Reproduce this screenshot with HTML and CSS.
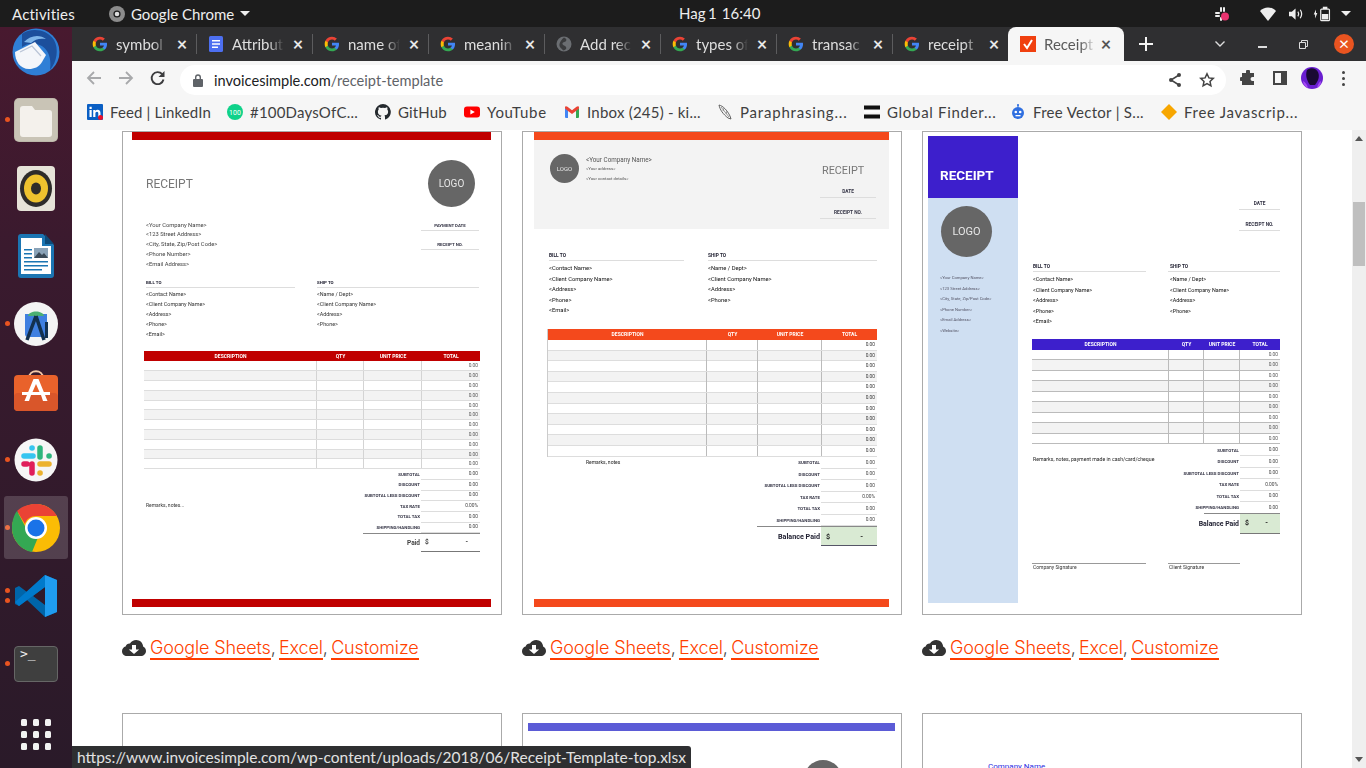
FILE: index.html
```html
<!DOCTYPE html>
<html lang="en">
<head>
<meta charset="utf-8">
<title>Receipt Templates</title>
<link rel="stylesheet" href="styles.css">
</head>
<body>
<svg class="defs" width="0" height="0" aria-hidden="true">
  <defs>
    <symbol id="g" viewBox="0 0 48 48">
      <path fill="#4285f4" d="M45.1 24.5c0-1.600-.1-3.100-.4-4.500H24v8.500h11.800c-.5 2.800-2.100 5.100-4.400 6.700v5.500h7.100c4.200-3.800 6.600-9.500 6.600-16.200z"/>
      <path fill="#34a853" d="M24 46c5.900 0 10.900-2 14.500-5.300l-7.100-5.500c-2 1.300-4.500 2.100-7.400 2.100-5.700 0-10.500-3.800-12.200-9H4.400v5.700C8 41.200 15.400 46 24 46z"/>
      <path fill="#fbbc05" d="M11.800 28.300c-.4-1.300-.7-2.800-.7-4.300s.3-3 .7-4.300V14H4.400C2.900 17 2 20.400 2 24s.9 7 2.400 10l7.400-5.700z"/>
      <path fill="#ea4335" d="M24 10.800c3.200 0 6.100 1.100 8.400 3.300l6.300-6.300C34.900 4.200 29.900 2 24 2 15.400 2 8 6.800 4.400 14l7.400 5.700c1.700-5.200 6.500-8.900 12.200-8.900z"/>
    </symbol>
    <symbol id="cloud" viewBox="0 0 24 16">
      <path fill="#333" d="M5 16C2.200 16 0 13.900 0 11.200c0-2.200 1.500-4.100 3.600-4.600C4.200 4.600 6 3.300 8 3.500 9.300 1.400 11.600 0 14.200 0c3.700 0 6.700 2.800 6.900 6.400 1.700.8 2.900 2.500 2.900 4.500 0 2.800-2.300 5.100-5.200 5.100z"/>
      <path fill="#fff" d="M10 5h4v4.500h3.200L12 14 6.800 9.500H10z"/>
    </symbol>
  </defs>
</svg>

<div class="screen">
  <header class="topbar">
    <span class="activities">Activities</span>
    <span class="appmenu">
      <svg class="chrome-mono" viewBox="0 0 16 16"><circle cx="8" cy="8" r="8" fill="#8c8c8c"/><circle cx="8" cy="8" r="3.600" fill="#1c1c1c"/><circle cx="8" cy="8" r="2.300" fill="#ddd"/></svg>
      <span>Google Chrome</span>
      <i class="tri"></i>
    </span>
    <span class="clock">Hag 1&nbsp;&nbsp;16:40</span>
    <span class="tray">
      <svg class="t-slack" viewBox="0 0 16 16"><g fill="#eee"><rect x="1" y="6" width="5" height="2" rx="1"/><rect x="6" y="1" width="2" height="5" rx="1"/><rect x="9" y="1" width="2" height="5" rx="1"/><rect x="1" y="9" width="5" height="2" rx="1"/><rect x="6" y="11" width="2" height="4" rx="1"/></g><circle cx="11" cy="10.500" r="4" fill="#e8336f"/></svg>
      <svg class="t-wifi" viewBox="0 0 16 14"><path fill="#eee" d="M0 4 C4 -.8 12 -.8 16 4L8 14z"/></svg>
      <svg class="t-vol" viewBox="0 0 16 14"><path fill="#eee" d="M0 4.500h3L7 1v12L3 9.500H0z"/><path fill="none" stroke="#eee" stroke-width="1.300" d="M9.500 4.500c1 1.500 1 3.500 0 5M12 2.500c2 3 2 6 0 9"/></svg>
      <svg class="t-bat" viewBox="0 0 22 16"><path fill="#eee" d="M3 8.500 5.500 3v4H7L4.500 13V8.500z"/><rect x="10.700" y="2.700" width="9.600" height="12.600" rx="1" fill="none" stroke="#eee" stroke-width="1.300"/><rect x="13" y="0" width="5" height="2.500" fill="#eee"/><rect x="12" y="8" width="7" height="6" fill="#eee"/></svg>
      <i class="tri tri-end"></i>
    </span>
  </header>

  <div class="desktop">
    <nav class="dock">
      <div class="dock-item first">
        <svg class="ic-48" viewBox="0 0 48 48"><circle cx="24" cy="24" r="23.500" fill="#2f7fd6"/><path fill="#1c4f9c" d="M10 6c8-6 24-6 32 6 5 9 3 22-4 30 2-12-2-24-14-26-5-1-10 0-14 3z"/><path fill="#7fb6ea" d="M12 14c6-7 16-8 22-3-6-1-11 0-15 4z"/><path fill="#f4f6fa" d="M3 24l20-10 11 13-4 7c-3 5-8 7-13 7-9 0-14-8-14-17z"/><path fill="none" stroke="#b9c4d6" stroke-width="1.200" d="M8 24l12-6 9 10"/></svg>
      </div>
      <div class="dock-item dot">
        <svg class="ic-folder" viewBox="0 0 44 44"><rect width="44" height="44" rx="5" fill="#bdb8aa"/><rect x="1" y="1" width="42" height="42" rx="4" fill="#c9c4b6"/><path fill="#f4f1ec" d="M6 11c0-2 1-3 3-3h9l3 4h14c2 0 3 1 3 3v21c0 2-1 3-3 3H9c-2 0-3-1-3-3z"/></svg>
      </div>
      <div class="dock-item">
        <svg class="ic-rhythm" viewBox="0 0 38 45"><rect width="38" height="45" rx="4" fill="#e6e3d8"/><ellipse cx="19" cy="22.500" rx="16" ry="18.500" fill="#2e2c2a"/><ellipse cx="19" cy="22.500" rx="12" ry="14" fill="#eec22e"/><ellipse cx="19" cy="22.500" rx="5" ry="6" fill="#2e2c2a"/></svg>
      </div>
      <div class="dock-item">
        <svg class="ic-writer" viewBox="0 0 36 44"><path fill="#1b75b2" d="M3 0h22l11 11v30a3 3 0 0 1-3 3H3a3 3 0 0 1-3-3V3a3 3 0 0 1 3-3z"/><path fill="#fff" d="M3 4h21v8h9v28H3z"/><path fill="#0e4a78" d="M27 0l9 10h-9z"/><g fill="#1b75b2"><rect x="6" y="15" width="8" height="1.500"/><rect x="6" y="19" width="8" height="1.500"/><rect x="6" y="23" width="8" height="1.500"/><rect x="6" y="27" width="24" height="1.500"/><rect x="6" y="31" width="24" height="1.500"/><rect x="6" y="35" width="18" height="1.500"/></g><rect x="16" y="14" width="14" height="10" fill="#8aa3b8"/><path fill="#3a4a58" d="M16 24l5-6 3 3 2-2 4 5z"/></svg>
      </div>
      <div class="dock-item dot">
        <svg class="ic-circle" viewBox="0 0 44 44"><ellipse cx="22" cy="22" rx="22" ry="22" fill="#f4f4f4"/><path fill="#3f7fe0" d="M11 12h22v21a2 2 0 0 1-2 2H14a3 3 0 0 1-3-3z"/><path fill="#4caf73" d="M14 14c1-6 15-6 16 0z"/><path fill="none" stroke="#12304f" stroke-width="3.500" d="M22 14L13 38M22 14l8 24"/><rect x="31" y="20" width="3" height="16" fill="#12304f"/></svg>
      </div>
      <div class="dock-item store">
        <svg class="ic-store" viewBox="0 0 44 42"><path fill="none" stroke="#f5c9a8" stroke-width="2" d="M15 9c0-9 14-9 14 0"/><rect y="6" width="44" height="36" rx="4" fill="#e9622b"/><rect y="24" width="44" height="18" rx="4" fill="#d9562a"/><path fill="#fff" d="M19.500 10h5l9 22h-4.500L27 26H17l-2 6h-4.500zM22 15l-3.500 8h7z"/><rect x="8" y="23" width="28" height="3" fill="#fff"/></svg>
      </div>
      <div class="dock-item dot">
        <svg class="ic-circle" viewBox="0 0 44 44"><circle cx="22" cy="22" r="21.500" fill="#f6f6f6"/><g stroke-width="5.500" stroke-linecap="round"><path stroke="#36c5f0" d="M10 18h9"/><path stroke="#2eb67d" d="M26 10v9"/><path stroke="#ecb22e" d="M26 26h9"/><path stroke="#e01e5a" d="M18 26v9M10 26h3"/><path stroke="#36c5f0" d="M18 10h.1"/><path stroke="#2eb67d" d="M35 18h.1"/><path stroke="#ecb22e" d="M26 35h.1"/></g></svg>
      </div>
      <div class="dock-item dot active">
        <svg class="ic-48" viewBox="0 0 48 48"><circle cx="24" cy="24" r="24" fill="#fbbc05"/><path fill="#ea4335" d="M24 0c9 0 17 5 21 12H24c-5 0-10 3-11 8L5 7c4-4 11-7 19-7z"/><path fill="#34a853" d="M5 7l9 17c2 5 6 8 13 7l-7 17C9 46 0 36 0 24 0 17 2 11 5 7z"/><circle cx="24" cy="24" r="11" fill="#fff"/><circle cx="24" cy="24" r="8.500" fill="#1a73e8"/></svg>
      </div>
      <div class="dock-item dot dot2">
        <svg class="ic-code" viewBox="0 0 42 42"><path fill="#0065a9" d="M30 0L12 17 4 11 0 13v16l4 2 8-6 18 17 12-5V5zM30 12v18L18 21z"/><path fill="#1f9cf0" d="M30 0l12 5v32l-12 5z"/><path fill="#007acc" d="M0 27l30-27v12L4 31z"/></svg>
      </div>
      <div class="dock-item dot">
        <div class="term"><span>&gt;_</span></div>
      </div>
      <div class="apps"><i></i><i></i><i></i><i></i><i></i><i></i><i></i><i></i><i></i></div>
    </nav>

    <main class="browser">
      <div class="tabstrip">
        <div class="tab"><svg class="fav"><use href="#g"/></svg><span class="title">symbol</span><span class="x">×</span></div>
        <div class="tab"><svg class="fav" viewBox="0 0 16 16"><rect x="1" width="14" height="16" rx="1.500" fill="#4d6ff0"/><path fill="#fff" d="M4 4h8v1.500H4zM4 7.300h8v1.500H4zM4 10.600h6v1.500H4z"/></svg><span class="title">Attribut</span><span class="x">×</span></div>
        <div class="tab"><svg class="fav"><use href="#g"/></svg><span class="title">name of</span><span class="x">×</span></div>
        <div class="tab"><svg class="fav"><use href="#g"/></svg><span class="title">meanin</span><span class="x">×</span></div>
        <div class="tab"><svg class="fav" viewBox="0 0 16 16"><circle cx="8" cy="8" r="7.500" fill="#6b6e72"/><path fill="#3a3b3d" d="M8 1.500c2 1 3 2 2 3.500S6 6 6.500 8 9 9 10 11s-1 3-2.500 3.500C5 12 3 11 3.500 8 4 6 6 3 8 1.500z"/></svg><span class="title">Add rec</span><span class="x">×</span></div>
        <div class="tab"><svg class="fav"><use href="#g"/></svg><span class="title">types of</span><span class="x">×</span></div>
        <div class="tab"><svg class="fav"><use href="#g"/></svg><span class="title">transac</span><span class="x">×</span></div>
        <div class="tab nosep"><svg class="fav"><use href="#g"/></svg><span class="title">receipt</span><span class="x">×</span></div>
        <div class="tab active"><svg class="fav" viewBox="0 0 16 16"><rect width="16" height="16" fill="#f0400f"/><path fill="none" stroke="#fff" stroke-width="2" d="M4 8l3 4 5-8"/></svg><span class="title">Receipt</span><span class="x">×</span></div>
        <svg class="plus" viewBox="0 0 14 14"><path stroke="#f4f4f4" stroke-width="2" d="M7 0v14M0 7h14"/></svg>
        <div class="winctl">
          <svg class="w-chev" viewBox="0 0 10 6"><path fill="none" stroke="#ddd" stroke-width="1.400" d="M.5.500 5 5 9.500.500"/></svg>
          <i class="w-min"></i>
          <svg class="w-res" viewBox="0 0 9 9"><path fill="none" stroke="#ddd" d="M.5 2.500h6v6h-6zM2.500 2.500v-2h6v6h-2"/></svg>
          <span class="w-close">×</span>
        </div>
      </div>

      <div class="toolbar">
        <svg class="nav back" viewBox="0 0 16 16"><path fill="none" stroke="#a8a9ab" stroke-width="1.800" d="M15 8H2M8 2 2 8l6 6"/></svg>
        <svg class="nav fwd" viewBox="0 0 16 16"><path fill="none" stroke="#a8a9ab" stroke-width="1.800" d="M1 8h13M8 2l6 6-6 6"/></svg>
        <svg class="nav reload" viewBox="0 0 16 16"><path fill="none" stroke="#3c3c3e" stroke-width="1.900" d="M13.500 9.500a6 6 0 1 1-1.300-5.300"/><path fill="#3c3c3e" d="M14.500 1v6h-6z"/></svg>
        <div class="omnibox">
          <svg class="lock" viewBox="0 0 10 13"><path fill="#5f6368" d="M1 5h8a1 1 0 0 1 1 1v6a1 1 0 0 1-1 1H1a1 1 0 0 1-1-1V6a1 1 0 0 1 1-1z"/><path fill="none" stroke="#5f6368" stroke-width="1.400" d="M2.700 5V3.300a2.300 2.300 0 0 1 4.600 0V5"/></svg>
          <span class="url"><b>invoicesimple.com</b>/receipt-template</span>
          <svg class="omni-ic" viewBox="0 0 16 16"><path fill="none" stroke="#444" stroke-width="1.500" d="M12 3 4 8l8 5"/><circle cx="12" cy="3" r="2" fill="#444"/><circle cx="4" cy="8" r="2" fill="#444"/><circle cx="12" cy="13" r="2" fill="#444"/></svg>
          <svg class="omni-ic star" viewBox="0 0 16 16"><path fill="none" stroke="#444" stroke-width="1.500" d="M8 1.800l1.900 4.100 4.400.5-3.300 3 .9 4.400L8 11.600l-3.900 2.200.9-4.400-3.300-3 4.400-.5z"/></svg>
        </div>
        <svg class="tool puzzle" viewBox="0 0 16 16"><path fill="#444" d="M6 1.500a2 2 0 0 1 4 0V3h4v4h-1.500a2 2 0 0 0 0 4H14v4H2v-4h-.5a2 2 0 0 1 0-4H2V3h4z"/></svg>
        <svg class="tool panel" viewBox="0 0 16 16"><path fill="#444" d="M1 1h14v14H1zM3 3v10h6V3z"/></svg>
        <svg class="avatar" viewBox="0 0 22 22"><circle cx="11" cy="11" r="11" fill="#6a1fd0"/><path fill="#1a0a33" d="M6 3c4-3 9-2 11 2 2 5 0 9-3 13H9C6 14 4 8 6 3z"/><path fill="#a64bf5" d="M2 14c2 1 4 3 5 7-3-1-5-4-5-7zM20 14c-2 1-3 3-4 7 3-1 4-4 4-7z"/></svg>
        <span class="kebab"><i></i><i></i><i></i></span>
      </div>

      <div class="bookmarks">
        <a class="bm bm-1"><svg viewBox="0 0 16 16"><rect width="16" height="16" rx="1" fill="#0a5fc4"/><path fill="#fff" d="M2.500 6h2.200v7H2.500zM2.500 2.800h2.200V5H2.500zM6.200 6h2.100v1c.5-.8 1.300-1.200 2.300-1.200 2 0 2.900 1.300 2.900 3.300V13h-2.200V9.500c0-1-.4-1.700-1.300-1.700S8.400 8.500 8.400 9.500V13H6.200z"/><circle cx="13.500" cy="13.500" r="2.500" fill="#e8112d"/></svg><span>Feed | LinkedIn</span></a>
        <a class="bm bm-2"><svg viewBox="0 0 16 16"><circle cx="8" cy="8" r="8" fill="#0fd28a"/><text x="8" y="10.500" text-anchor="middle" font-size="7" fill="#fff">100</text></svg><span>#100DaysOfC...</span></a>
        <a class="bm bm-3"><svg viewBox="0 0 16 16"><path fill="#24292e" d="M8 0a8 8 0 0 0-2.500 15.600c.4.100.5-.2.500-.4v-1.400c-2.200.5-2.700-1-2.700-1-.4-.9-.9-1.200-.9-1.200-.7-.5.100-.5.100-.5.800.1 1.200.8 1.200.8.700 1.200 1.900.9 2.300.7.100-.5.300-.9.500-1.100-1.800-.2-3.600-.9-3.600-4 0-.9.300-1.600.8-2.100-.1-.2-.4-1 .1-2.100 0 0 .7-.2 2.200.8a7.600 7.600 0 0 1 4 0c1.500-1 2.200-.8 2.200-.8.400 1.100.2 1.900.1 2.100.5.600.8 1.300.8 2.100 0 3.100-1.900 3.700-3.700 3.900.3.300.6.800.6 1.500v2.200c0 .2.100.5.600.4A8 8 0 0 0 8 0z"/></svg><span>GitHub</span></a>
        <a class="bm bm-4"><svg viewBox="0 0 16 16"><rect y="2.500" width="16" height="11" rx="3" fill="#f00"/><path fill="#fff" d="M6.400 5.500v5L10.800 8z"/></svg><span>YouTube</span></a>
        <a class="bm bm-5"><svg viewBox="0 0 16 16"><path fill="#4285f4" d="M1 14V4l3 2v8H2a1 1 0 0 1-1-1z"/><path fill="#34a853" d="M15 14V4l-3 2v8h2a1 1 0 0 0 1-1z"/><path fill="#ea4335" d="M1 3.500C1 2 2.500 2 3.500 2.800L8 6.300l4.500-3.500C13.500 2 15 2 15 3.500v1L12 7 8 10 4 7 1 4.500z"/></svg><span>Inbox (245) - ki...</span></a>
        <a class="bm bm-6"><svg viewBox="0 0 16 16"><path fill="#f4f4f4" stroke="#555" stroke-width=".9" d="M2 1c4 1 8 5 11 11l1 3-3-1C6 10 3 6 2 1z"/><path fill="none" stroke="#777" stroke-width=".7" d="M4 3l8 10M7 4 6 7m4 0-1 3"/></svg><span>Paraphrasing...</span></a>
        <a class="bm bm-7"><svg viewBox="0 0 16 16"><rect y="1.500" width="16" height="4" fill="#111"/><rect y="6.500" width="16" height="2" fill="#fff"/><rect y="10.500" width="16" height="4" fill="#111"/></svg><span>Global Finder...</span></a>
        <a class="bm bm-8"><svg viewBox="0 0 16 16"><circle cx="8" cy="9" r="6" fill="#2f6fe0"/><path stroke="#2f6fe0" stroke-width="1.200" d="M8 3V.8"/><circle cx="8" cy="1" r="1" fill="#2f6fe0"/><circle cx="5.800" cy="8" r="1.300" fill="#fff"/><circle cx="10.200" cy="8" r="1.300" fill="#fff"/><rect x="5.500" y="11" width="5" height="1.300" fill="#fff"/></svg><span>Free Vector | S...</span></a>
        <a class="bm bm-9"><svg viewBox="0 0 16 16"><path fill="#f7a600" d="M8 0l8 8-8 8-8-8z"/></svg><span>Free Javascrip...</span></a>
      </div>

      <div class="viewport">
        <div class="page">
          <div class="templates">

            <section class="template">
              <div class="card doc doc-a">
                <div class="bar"></div>
                <div class="a-head"><h2 class="rc">RECEIPT</h2><div class="logo">LOGO</div></div>
                <div class="a-info">
                  <div class="lines"><p>&lt;Your Company Name&gt;</p><p>&lt;123 Street Address&gt;</p><p>&lt;City, State, Zip/Post Code&gt;</p><p>&lt;Phone Number&gt;</p><p>&lt;Email Address&gt;</p></div>
                  <div class="meta"><p>PAYMENT DATE</p><p>RECEIPT NO.</p></div>
                </div>
                <div class="parties">
                  <div class="party p-l"><h3>BILL TO</h3><p>&lt;Contact Name&gt;</p><p>&lt;Client Company Name&gt;</p><p>&lt;Address&gt;</p><p>&lt;Phone&gt;</p><p>&lt;Email&gt;</p></div>
                  <div class="party p-r"><h3>SHIP TO</h3><p>&lt;Name / Dept&gt;</p><p>&lt;Client Company Name&gt;</p><p>&lt;Address&gt;</p><p>&lt;Phone&gt;</p></div>
                </div>
                <div class="table">
                  <div class="thead"><span>DESCRIPTION</span><span>QTY</span><span>UNIT PRICE</span><span>TOTAL</span></div>
                  <div class="row"><i></i><i></i><i></i><span>0.00</span></div>
                  <div class="row"><i></i><i></i><i></i><span>0.00</span></div>
                  <div class="row"><i></i><i></i><i></i><span>0.00</span></div>
                  <div class="row"><i></i><i></i><i></i><span>0.00</span></div>
                  <div class="row"><i></i><i></i><i></i><span>0.00</span></div>
                  <div class="row"><i></i><i></i><i></i><span>0.00</span></div>
                  <div class="row"><i></i><i></i><i></i><span>0.00</span></div>
                  <div class="row"><i></i><i></i><i></i><span>0.00</span></div>
                  <div class="row"><i></i><i></i><i></i><span>0.00</span></div>
                  <div class="row"><i></i><i></i><i></i><span>0.00</span></div>
                  <div class="row"><i></i><i></i><i></i><span>0.00</span></div>
                </div>
                <div class="summary">
                  <p class="remarks">Remarks, notes...</p>
                  <div class="totals">
                    <div class="tr"><span>SUBTOTAL</span><span>0.00</span></div>
                    <div class="tr"><span>DISCOUNT</span><span>0.00</span></div>
                    <div class="tr"><span>SUBTOTAL LESS DISCOUNT</span><span>0.00</span></div>
                    <div class="tr"><span>TAX RATE</span><span>0.00%</span></div>
                    <div class="tr"><span>TOTAL TAX</span><span>0.00</span></div>
                    <div class="tr"><span>SHIPPING/HANDLING</span><span>0.00</span></div>
                    <div class="paid"><span>Paid</span><span><b>$</b><b>-</b></span></div>
                  </div>
                </div>
                <div class="bar bar-end"></div>
              </div>
              <div class="links"><svg class="cloud"><use href="#cloud"/></svg><span class="ll"><a>Google Sheets</a>, <a>Excel</a>, <a>Customize</a></span></div>
            </section>

            <section class="template">
              <div class="card doc doc-b">
                <div class="bar"></div>
                <div class="b-head">
                  <div class="logo">LOGO</div>
                  <div class="b-co"><p class="co-name">&lt;Your Company Name&gt;</p><p class="co-sm">&lt;Your address&gt;</p><p class="co-sm co-gap">&lt;Your contact details&gt;</p></div>
                  <div class="b-right"><h2 class="rc">RECEIPT</h2><div class="meta"><p>DATE</p><p>RECEIPT NO.</p></div></div>
                </div>
                <div class="parties">
                  <div class="party p-l"><h3>BILL TO</h3><p>&lt;Contact Name&gt;</p><p>&lt;Client Company Name&gt;</p><p>&lt;Address&gt;</p><p>&lt;Phone&gt;</p><p>&lt;Email&gt;</p></div>
                  <div class="party p-r"><h3>SHIP TO</h3><p>&lt;Name / Dept&gt;</p><p>&lt;Client Company Name&gt;</p><p>&lt;Address&gt;</p><p>&lt;Phone&gt;</p></div>
                </div>
                <div class="table">
                  <div class="thead"><span>DESCRIPTION</span><span>QTY</span><span>UNIT PRICE</span><span>TOTAL</span></div>
                  <div class="row"><i></i><i></i><i></i><span>0.00</span></div>
                  <div class="row"><i></i><i></i><i></i><span>0.00</span></div>
                  <div class="row"><i></i><i></i><i></i><span>0.00</span></div>
                  <div class="row"><i></i><i></i><i></i><span>0.00</span></div>
                  <div class="row"><i></i><i></i><i></i><span>0.00</span></div>
                  <div class="row"><i></i><i></i><i></i><span>0.00</span></div>
                  <div class="row"><i></i><i></i><i></i><span>0.00</span></div>
                  <div class="row"><i></i><i></i><i></i><span>0.00</span></div>
                  <div class="row"><i></i><i></i><i></i><span>0.00</span></div>
                  <div class="row"><i></i><i></i><i></i><span>0.00</span></div>
                  <div class="row"><i></i><i></i><i></i><span>0.00</span></div>
                </div>
                <div class="summary">
                  <p class="remarks">Remarks, notes</p>
                  <div class="totals">
                    <div class="tr"><span>SUBTOTAL</span><span>0.00</span></div>
                    <div class="tr"><span>DISCOUNT</span><span>0.00</span></div>
                    <div class="tr"><span>SUBTOTAL LESS DISCOUNT</span><span>0.00</span></div>
                    <div class="tr"><span>TAX RATE</span><span>0.00%</span></div>
                    <div class="tr"><span>TOTAL TAX</span><span>0.00</span></div>
                    <div class="tr"><span>SHIPPING/HANDLING</span><span>0.00</span></div>
                    <div class="paid"><span>Balance Paid</span><span><b>$</b><b>-</b></span></div>
                  </div>
                </div>
                <div class="bar bar-end"></div>
              </div>
              <div class="links"><svg class="cloud"><use href="#cloud"/></svg><span class="ll"><a>Google Sheets</a>, <a>Excel</a>, <a>Customize</a></span></div>
            </section>

            <section class="template">
              <div class="card doc doc-c">
                <aside class="side">
                  <div class="side-head"><h2>RECEIPT</h2></div>
                  <div class="logo">LOGO</div>
                  <div class="side-lines"><p>&lt;Your Company Name&gt;</p><p>&lt;123 Street Address&gt;</p><p>&lt;City, State, Zip/Post Code&gt;</p><p>&lt;Phone Number&gt;</p><p>&lt;Email Address&gt;</p><p>&lt;Website&gt;</p></div>
                </aside>
                <div class="c-main">
                  <div class="meta"><p>DATE</p><p>RECEIPT NO.</p></div>
                  <div class="parties">
                    <div class="party p-l"><h3>BILL TO</h3><p>&lt;Contact Name&gt;</p><p>&lt;Client Company Name&gt;</p><p>&lt;Address&gt;</p><p>&lt;Phone&gt;</p><p>&lt;Email&gt;</p></div>
                    <div class="party p-r"><h3>SHIP TO</h3><p>&lt;Name / Dept&gt;</p><p>&lt;Client Company Name&gt;</p><p>&lt;Address&gt;</p><p>&lt;Phone&gt;</p></div>
                  </div>
                  <div class="table">
                    <div class="thead"><span>DESCRIPTION</span><span>QTY</span><span>UNIT PRICE</span><span>TOTAL</span></div>
                    <div class="row"><i></i><i></i><i></i><span>0.00</span></div>
                    <div class="row"><i></i><i></i><i></i><span>0.00</span></div>
                    <div class="row"><i></i><i></i><i></i><span>0.00</span></div>
                    <div class="row"><i></i><i></i><i></i><span>0.00</span></div>
                    <div class="row"><i></i><i></i><i></i><span>0.00</span></div>
                    <div class="row"><i></i><i></i><i></i><span>0.00</span></div>
                    <div class="row"><i></i><i></i><i></i><span>0.00</span></div>
                    <div class="row"><i></i><i></i><i></i><span>0.00</span></div>
                    <div class="row"><i></i><i></i><i></i><span>0.00</span></div>
                  </div>
                  <div class="summary">
                    <p class="remarks">Remarks, notes, payment made in cash/card/cheque</p>
                    <div class="totals">
                      <div class="tr"><span>SUBTOTAL</span><span>0.00</span></div>
                      <div class="tr"><span>DISCOUNT</span><span>0.00</span></div>
                      <div class="tr"><span>SUBTOTAL LESS DISCOUNT</span><span>0.00</span></div>
                      <div class="tr"><span>TAX RATE</span><span>0.00%</span></div>
                      <div class="tr"><span>TOTAL TAX</span><span>0.00</span></div>
                      <div class="tr"><span>SHIPPING/HANDLING</span><span>0.00</span></div>
                      <div class="paid"><span>Balance Paid</span><span><b>$</b><b>-</b></span></div>
                    </div>
                  </div>
                  <div class="signs"><p class="s-l">Company Signature</p><p class="s-r">Client Signature</p></div>
                </div>
              </div>
              <div class="links"><svg class="cloud"><use href="#cloud"/></svg><span class="ll"><a>Google Sheets</a>, <a>Excel</a>, <a>Customize</a></span></div>
            </section>

            <section class="template"><div class="card"></div></section>
            <section class="template"><div class="card peek-b"><div class="peek-bar"></div><div class="peek-logo"></div></div></section>
            <section class="template"><div class="card peek-c"><p>Company Name</p></div></section>
          </div>
        </div>
        <div class="scrollbar">
          <i class="arr up"></i>
          <div class="track"><div class="thumb"></div></div>
          <i class="arr down"></i>
        </div>
        <div class="status">https://www.invoicesimple.com/wp-content/uploads/2018/06/Receipt-Template-top.xlsx</div>
      </div>
    </main>
  </div>
</div>
</body>
</html>
```
FILE: styles.css
```css
* { box-sizing: border-box; }
html, body { margin: 0; padding: 0; height: 100%; overflow: hidden; }
body { font-family: "Lato", "Noto Sans", sans-serif; background: #fff; color: #222; }
p, h2, h3 { margin: 0; font-weight: inherit; font-size: inherit; }
.defs { position: absolute; }
.screen { width: 1366px; height: 768px; display: flex; flex-direction: column; overflow: hidden; }

/* top bar */
.topbar { height: 27px; background: #1c1c1c; color: #eee; display: flex; align-items: center; font-size: 15px; position: relative; flex: none; }
.activities { margin-left: 12px; width: 97px; letter-spacing: .2px; }
.appmenu { display: flex; align-items: center; gap: 6px; }
.chrome-mono { width: 16px; height: 16px; }
.tri { width: 0; height: 0; border: 5px solid transparent; border-top: 5px solid #eee; border-bottom: 0; margin-left: 0; }
.clock { position: absolute; left: 679px; top: 5px; line-height: 17px; word-spacing: -1.300px; }
.tray { margin-left: auto; display: flex; align-items: center; }
.t-slack { width: 16px; height: 16px; margin-right: 30px; }
.t-wifi { width: 16px; height: 14px; margin-right: 13px; }
.t-vol { width: 15px; height: 14px; margin-right: 7px; }
.t-bat { width: 20px; height: 16px; margin-right: 10px; }
.tri-end { margin-right: 15px; }

.desktop { flex: 1; display: flex; min-height: 0; }

/* dock */
.dock { width: 72px; flex: none; background: linear-gradient(180deg, #48192f 0%, #3a1a2e 30%, #2a1a29 100%); display: flex; flex-direction: column; }
.dock-item { height: 68px; display: flex; align-items: center; justify-content: center; position: relative; flex: none; }
.dock-item.first { height: 59px; align-items: flex-start; padding-top: 1px; }
.dock-item.dot::before { content: ""; position: absolute; left: 5px; top: 31px; width: 5px; height: 5px; border-radius: 50%; background: #e95420; }
.dock-item.dot2::before { top: 26px; box-shadow: 0 10px 0 #e95420; }
.dock-item.active::after { content: ""; position: absolute; left: 4px; top: 2px; width: 64px; height: 63px; border-radius: 3px; background: rgba(255,255,255,.17); }
.dock-item.store { padding-bottom: 4px; }
.dock-item svg { position: relative; z-index: 1; flex: none; }
.ic-48 { width: 48px; height: 48px; }
.ic-folder { width: 44px; height: 44px; }
.ic-rhythm { width: 38px; height: 45px; }
.ic-writer { width: 36px; height: 44px; }
.ic-circle { width: 44px; height: 44px; }
.ic-store { width: 44px; height: 42px; }
.ic-code { width: 42px; height: 42px; }
.term { width: 44px; height: 36px; background: #3f3f3f; border: 1px solid #666; border-radius: 4px; color: #eee; font: 13px/14px "DejaVu Sans Mono", monospace; padding: 0 5px; }
.apps { display: grid; grid-template-columns: repeat(3, 6px); grid-auto-rows: 6.500px; gap: 5.500px 6px; margin: 21px 0 0 21px; }
.apps i { background: #f2f2f2; border-radius: 1.500px; }

/* browser */
.browser { flex: 1; min-width: 0; display: flex; flex-direction: column; }
.tabstrip { height: 34px; flex: none; background: #2f2f31; display: flex; padding-left: 12px; color: #dedede; font-size: 15px; align-items: stretch; }
.tab { width: 116px; flex: none; display: flex; align-items: center; padding: 0 11px 0 8px; position: relative; }
.tab::after { content: ""; position: absolute; right: 3px; top: 7px; height: 20px; width: 1px; background: #5c5c5e; }
.tab.nosep::after, .tab.active::after { display: none; }
.fav { width: 16px; height: 16px; flex: none; }
.title { margin-left: 8px; width: 52px; overflow: hidden; white-space: nowrap; flex: none; -webkit-mask-image: linear-gradient(90deg, #000 70%, transparent); mask-image: linear-gradient(90deg, #000 70%, transparent); }
.x { margin-left: auto; font-size: 18px; font-weight: 700; line-height: 18px; width: 14px; text-align: center; color: #e8e8e8; }
.tab.active { background: #f6f6f6; color: #5a5a5a; margin-left: -4px; padding-left: 12px; border-radius: 8px 8px 0 0; }
.tab.active .x { color: #555; }
.plus { width: 14px; height: 14px; margin: 10px 0 0 15px; flex: none; }
.winctl { margin-left: auto; display: flex; align-items: center; padding-right: 12px; }
.w-chev { width: 10px; height: 6px; }
.w-min { width: 9px; height: 1.500px; background: #ddd; margin: 6px 0 0 33px; }
.w-res { width: 9px; height: 9px; margin-left: 32px; }
.w-close { width: 20px; height: 20px; border-radius: 50%; background: #e95420; color: #fff; margin-left: 26px; text-align: center; font-size: 18px; line-height: 19px; }

.toolbar { height: 34px; flex: none; background: #f6f6f6; display: flex; align-items: center; position: relative; }
.nav { width: 16px; height: 16px; flex: none; }
.back { margin-left: 14px; }
.fwd { margin-left: 16px; }
.reload { margin-left: 16px; }
.omnibox { width: 1046px; height: 30px; margin: 4px 0 0 14px; background: #fff; border-radius: 15px; display: flex; align-items: center; flex: none; padding-right: 11px; }
.lock { width: 10px; height: 13px; margin-left: 13px; flex: none; }
.url { margin-left: 11px; font-size: 14.600px; color: #5f6368; }
.url b { font-weight: 400; color: #202124; }
.omni-ic { width: 16px; height: 16px; margin-left: auto; }
.star { margin-left: 16px; }
.tool { width: 16px; height: 16px; flex: none; }
.puzzle { margin-left: 14px; }
.panel { margin-left: 16px; }
.avatar { width: 22px; height: 22px; margin-left: 13px; flex: none; }
.kebab { display: flex; flex-direction: column; gap: 3px; margin-left: 19px; }
.kebab i { width: 3px; height: 3px; border-radius: 50%; background: #444; }

.bookmarks { height: 35px; flex: none; background: #f6f6f6; display: flex; align-items: center; padding: 0 0 1px 15px; font-size: 15px; color: #3f3f41; }
.bm { display: flex; align-items: center; gap: 7px; white-space: nowrap; margin-right: 16px; flex: none; }
.bm svg { width: 16px; height: 16px; flex: none; font-family: "Roboto", sans-serif; }
.bm span { display: block; }
.bm-1 span { width: 101px; letter-spacing: .13px; }
.bm-2 span { width: 109px; letter-spacing: .2px; }
.bm-3 span { width: 50px; letter-spacing: .15px; }
.bm-4 span { width: 61px; letter-spacing: .7px; }
.bm-5 span { width: 114px; letter-spacing: .22px; }
.bm-6 span { width: 108px; letter-spacing: .8px; }
.bm-7 span { width: 107px; letter-spacing: .7px; }
.bm-8 span { width: 112px; letter-spacing: .3px; }
.bm-9 span { width: 113px; letter-spacing: .7px; }

/* page */
.viewport { flex: 1; min-height: 0; display: flex; position: relative; overflow: hidden; background: #fff; }
.page { flex: 1; min-width: 0; padding: 1px 0 0 50px; overflow: hidden; }
.templates { display: grid; grid-template-columns: repeat(3, 380px); column-gap: 20px; }
.template { display: flex; flex-direction: column; }
.card { width: 380px; height: 484px; border: 1px solid #aaa; background: #fff; flex: none; }
.links { height: 98px; flex: none; display: flex; align-items: flex-start; padding-top: 25px; font-family: "Inter", sans-serif; font-weight: 300; font-size: 18px; letter-spacing: -.15px; word-spacing: -1.500px; line-height: 24px; color: #444; }
.cloud { width: 24px; height: 16px; margin-right: 4px; flex: none; }
.ll { margin-top: -4px; white-space: nowrap; }
.ll a { color: #ff4100; border-bottom: 2px solid #ff3d00; word-spacing: 0; }

.scrollbar { width: 14px; flex: none; background: #efefef; display: flex; flex-direction: column; align-items: center; }
.arr { width: 0; height: 0; border: 4px solid transparent; flex: none; }
.arr.up { border-bottom: 5px solid #555; border-top: 0; margin-top: 6px; }
.arr.down { border-top: 5px solid #555; border-bottom: 0; margin-bottom: 6px; }
.track { flex: 1; width: 100%; padding: 61px 1px 0; }
.thumb { height: 64px; background: #bfbfbf; }
.status { position: absolute; left: 0; bottom: 0; width: 619px; height: 22px; background: #2e2f31; color: #e2e2e2; border-top-right-radius: 3px; font-size: 15.500px; line-height: 22px; padding-left: 5px; white-space: nowrap; }

/* mini documents */
.doc { font-family: "Roboto", "Liberation Sans", sans-serif; font-size: 6px; color: #444; display: flex; flex-direction: column; filter: blur(.25px); }
.bar { height: 8px; flex: none; }
.bar-end { margin-top: auto; height: 8px; }
.logo { border-radius: 50%; background: #666; color: #e6e6e6; display: flex; align-items: center; justify-content: center; flex: none; }
.rc { color: #777; font-weight: 400; }
.meta { flex: none; text-align: center; font-weight: 700; font-size: 4.800px; color: #334; }
.meta p { height: 11px; line-height: 10px; border-bottom: 1px solid #ddd; }
.party h3 { font-weight: 700; font-size: 4.800px; color: #223; line-height: 9px; height: 10px; border-bottom: 1px solid #ddd; }
.parties { display: flex; flex: none; }
.table { flex: none; }
.thead { display: grid; color: #fff; font-weight: 700; font-size: 5px; text-align: center; }
.row { display: grid; font-size: 4.800px; color: #555; text-align: right; border-bottom: 1px solid #ddd; }
.row i { border-right: 1px solid #d4d4d4; }
.row span { padding-right: 2px; }
.row:nth-child(odd) { background: #f3f3f3; }
.summary { display: flex; justify-content: space-between; flex: none; }
.totals { flex: none; display: flex; flex-direction: column; }
.tr, .paid { display: grid; }
.tr span:first-child, .paid span:first-child { display: flex; justify-content: flex-end; white-space: nowrap; padding-right: 1px; align-items: center; }
.tr span:first-child { font-weight: 700; font-size: 4.400px; color: #334; }
.tr span:last-child { text-align: right; padding-right: 2px; font-size: 4.800px; border-bottom: 1px solid #ddd; color: #444; }
.paid { border-top: 1px solid #888; }
.paid span:first-child { font-weight: 700; color: #444; }
.paid span:last-child { display: flex; justify-content: space-between; align-items: center; border-bottom: 1px solid #777; }
.paid b { font-weight: 700; }

/* doc a */
.doc-a { padding: 0 10px 7px 9px; }
.doc-a .bar { background: #c00000; }
.a-head { display: flex; justify-content: space-between; align-items: center; margin-top: 20px; padding: 0 16px 0 14px; flex: none; }
.doc-a .rc { font-size: 12px; }
.doc-a .logo { width: 47px; height: 47px; font-size: 10px; }
.a-info { display: flex; justify-content: space-between; margin-top: 13.500px; padding: 0 12px 0 14px; flex: none; }
.a-info .lines p { height: 9.800px; line-height: 9.800px; font-size: 5.800px; }
.a-info .meta { width: 58px; font-size: 4.400px; }
.a-info .meta p { height: 10px; line-height: 9px; margin-bottom: 9px; }
.doc-a .parties { margin-top: 8.500px; padding: 0 12px 0 14px; gap: 22px; color: #333; }
.doc-a .p-l { width: 149px; } .doc-a .p-r { width: 162px; }
.doc-a .party p { height: 9.800px; line-height: 9.800px; font-size: 5.400px; }
.doc-a .party h3 { margin-bottom: 2.500px; font-size: 4.400px; }
.doc-a .table { margin: 11.500px 11px 0 12px; }
.doc-a .thead, .doc-a .row { grid-template-columns: 173px 47px 58px 58px; }
.doc-a .thead { background: #c00000; height: 10.500px; line-height: 10.500px; }
.doc-a .row { height: 9.800px; line-height: 9px; }
.doc-a .summary { margin: 0 11px 0 12px; }
.doc-a .remarks { font-size: 5px; margin: 32.500px 0 0 2px; color: #333; }
.doc-a .tr, .doc-a .paid { grid-template-columns: 58px 59px; }
.doc-a .tr { height: 10.600px; line-height: 10px; }
.doc-a .paid { height: 19px; font-size: 6.500px; }
.doc-a .paid span:last-child { padding: 0 12px 0 4px; }

/* doc b */
.doc-b { padding: 0 12px 7px 11px; }
.doc-b .bar { background: #f4491c; }
.b-head { background: #f3f3f3; height: 89px; flex: none; display: flex; padding: 14px 13px 0 16px; }
.doc-b .logo { width: 29px; height: 29px; font-size: 6px; }
.b-co { margin-left: 7px; padding-top: 2px; color: #555; }
.co-name { font-size: 6.300px; line-height: 9px; }
.co-sm { font-size: 4.300px; line-height: 8px; }
.co-gap { margin-top: 2px; }
.b-right { margin-left: auto; width: 56px; padding-top: 10px; }
.doc-b .rc { font-size: 10.800px; line-height: 13px; padding-left: 2px; }
.doc-b .meta { margin-top: 10px; }
.doc-b .meta p + p { margin-top: 10px; }
.doc-b .parties { margin-top: 22px; padding: 0 12px 0 15px; gap: 24px; color: #111; }
.doc-b .p-l { width: 135px; } .doc-b .p-r { width: 169px; }
.doc-b .party p { height: 10.600px; line-height: 10.600px; font-size: 5.800px; }
.doc-b .party h3 { margin-bottom: 2px; }
.doc-b .table { margin: 13.500px 12px 0 13px; border-left: 1px solid #ccc; }
.doc-b .thead, .doc-b .row { grid-template-columns: 159px 51px 64px 55px; }
.doc-b .thead { background: #f4491c; height: 10.500px; line-height: 10.500px; }
.doc-b .row { height: 10.600px; line-height: 10px; color: #333; }
.doc-b .row i { border-right-color: #bbb; }
.doc-b .summary { margin: 0 12px 0 13px; }
.doc-b .remarks { font-size: 5px; margin: 2.500px 0 0 39px; color: #222; }
.doc-b .tr, .doc-b .paid { grid-template-columns: 64px 56px; }
.doc-b .tr { height: 11.600px; line-height: 11px; }
.doc-b .paid { height: 20px; font-size: 7.200px; }
.doc-b .paid span:first-child { color: #223; }
.doc-b .paid span:last-child { background: #d9ead3; padding: 0 14px 0 5px; color: #222; border-bottom-color: #556; }

/* doc c */
.doc-c { flex-direction: row; padding: 4px 0 0 5px; }
.side { width: 90px; height: 467px; background: #cfdff2; flex: none; }
.side-head { height: 62px; background: #3d1fcc; padding: 31px 0 0 12px; }
.side-head h2 { color: #fff; font-weight: 700; font-size: 13.500px; line-height: 17px; }
.doc-c .logo { width: 51px; height: 51px; font-size: 11px; margin: 8px 0 0 13px; }
.side-lines { margin: 16px 0 0 12px; font-size: 4.200px; color: #556; }
.side-lines p { height: 10.500px; line-height: 10.500px; }
.c-main { width: 262px; padding-left: 14px; display: flex; flex-direction: column; }
.c-main .meta { width: 41px; margin: 63px 0 0 auto; }
.c-main .meta p + p { margin-top: 10px; }
.c-main .parties { margin-top: 31px; padding-left: 1px; gap: 22px; color: #111; }
.c-main .p-l { width: 113px; } .c-main .p-r { width: 112px; }
.c-main .p-r p, .c-main .p-r h3 { padding-left: 2px; }
.c-main .party p { height: 10.500px; line-height: 10.500px; font-size: 5.400px; }
.c-main .party h3 { margin-bottom: 2px; }
.c-main .table { margin-top: 12px; }
.c-main .thead, .c-main .row { grid-template-columns: 137px 35px 36px 40px; }
.c-main .thead { background: #3d1fcc; height: 11px; line-height: 11px; }
.c-main .row { height: 10.500px; line-height: 10px; }
.c-main .row i { border-right-color: #bbb; }
.c-main .row { border-bottom-color: #bbb; }
.c-main .remarks { font-size: 5.200px; margin: 12px 0 0 1px; color: #222; }
.c-main .tr, .c-main .paid { grid-template-columns: 36px 40px; }
.c-main .tr { height: 11.500px; line-height: 11px; }
.c-main .paid { height: 20.500px; font-size: 6.900px; }
.c-main .paid span:first-child { color: #223; }
.c-main .paid span:last-child { background: #d9ead3; padding: 0 12px 0 5px; color: #222; }
.signs { display: flex; gap: 22px; margin-top: 29px; font-size: 5px; color: #333; }
.signs p { border-top: 1px solid #999; line-height: 7px; padding-left: 1px; }
.s-l { width: 114px; } .s-r { width: 72px; }

/* next row, cut off by the window */
.peek-b { padding: 9px 6px 0 5px; }
.peek-bar { height: 8px; background: #5b5bd6; }
.peek-logo { width: 38px; height: 38px; border-radius: 50%; background: #666; margin: 29px 0 0 276px; }
.peek-c { padding: 48px 0 0 65px; }
.peek-c p { font: 8px/10px "Roboto", sans-serif; color: #2a2ae0; }
```
